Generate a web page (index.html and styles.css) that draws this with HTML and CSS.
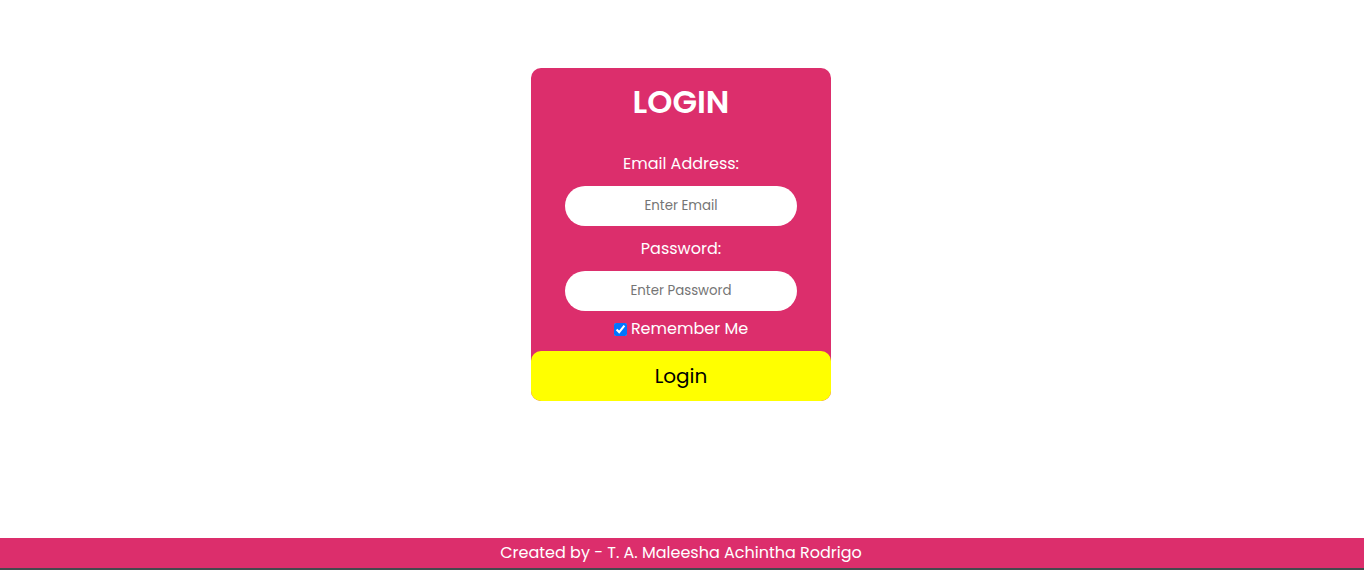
FILE: index.html
```html
<!DOCTYPE html>
<html lang="en">
<head>
<meta charset="utf-8">
<title>Login</title>
<link rel="stylesheet" href="styles.css">
</head>
<body>
<main class="page">
  <form class="card">
    <h1 class="title">LOGIN</h1>
    <label class="label" for="email">Email Address:</label>
    <input class="field" id="email" type="email" placeholder="Enter Email">
    <label class="label" for="pw">Password:</label>
    <input class="field" id="pw" type="password" placeholder="Enter Password">
    <label class="remember"><input type="checkbox" checked>Remember Me</label>
    <button class="btn" type="button">Login</button>
  </form>
</main>
<footer class="footer">Created by - T. A. Maleesha Achintha Rodrigo</footer>
</body>
</html>
```
FILE: styles.css
```css
html, body { margin: 0; padding: 0; }
body {
  min-height: 100vh;
  display: flex;
  flex-direction: column;
  font-family: "Poppins", "Open Sans", "Liberation Sans", sans-serif;
  background: #fff;
}
.page { flex: 1; display: flex; justify-content: center; align-items: flex-start; padding-right: 2px; }
.card {
  width: 300px;
  margin-top: 68px;
  padding-top: 14px;
  background: #dc2e6c;
  border-radius: 10px;
  display: flex;
  flex-direction: column;
  align-items: center;
  color: #fff;
}
.title { margin: 0 0 29px; font-size: 32px; line-height: 40px; font-weight: 600; }
.label { font-size: 16px; line-height: 24px; margin-top: 1px; margin-bottom: 10px; }
.field {
  width: 232px;
  height: 40px;
  box-sizing: border-box;
  border: none;
  border-radius: 20px;
  background: #fff;
  text-align: center;
  font-family: inherit;
  font-size: 13.333px;
  margin-bottom: 10px;
  outline: none;
}
.field::placeholder { color: #757575; }
.remember { font-size: 16px; line-height: 24px; display: flex; align-items: center; margin-top: -4px; margin-bottom: 10px; }
.remember input { margin: 0 4px 0 0; width: 13px; height: 13px; }
.btn {
  align-self: stretch;
  height: 50px;
  border: none;
  border-radius: 10px;
  background: #ffff00;
  color: #000;
  font-family: inherit;
  font-size: 20px;
}
.footer {
  height: 30px;
  padding-right: 2px;
  background: #dc2e6c;
  color: #fff;
  text-align: center;
  font-size: 16px;
  line-height: 30px;
  border-bottom: 2px solid #45494d;
}
```
